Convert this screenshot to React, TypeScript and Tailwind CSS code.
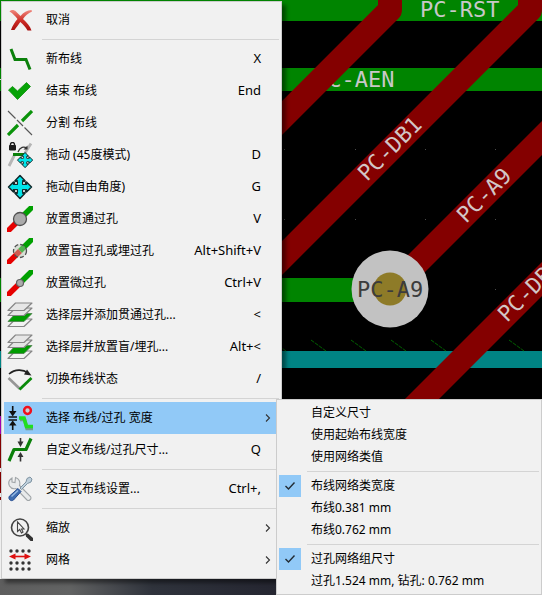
import React from "react";

type IconProps = { children: React.ReactNode };

const Icon = ({ children }: IconProps) => (
  <svg viewBox="0 0 26 26" className="h-[26px] w-[26px] shrink-0" aria-hidden="true">
    {children}
  </svg>
);

const MoveCross = () => (
  <g>
    <path
      d="M13 1.5 18 6.8h-2.2v3.4h3.7V8L24.500 13 19.500 18v-2.200h-3.700v3.400H18L13 24.500 8 19.200h2.200v-3.400H6.500V18L1.500 13 6.500 8v2.200h3.700V6.800H8z"
      fill="#00e5ea"
      stroke="#12292b"
      strokeWidth="1.500"
      strokeLinejoin="round"
    />
    <g fill="#f0f0f0" stroke="#12292b" strokeWidth="1.200">
      <rect x="7.500" y="7.500" width="3" height="3" rx="1" />
      <rect x="15.500" y="7.500" width="3" height="3" rx="1" />
      <rect x="7.500" y="15.500" width="3" height="3" rx="1" />
      <rect x="15.500" y="15.500" width="3" height="3" rx="1" />
    </g>
  </g>
);

const TwoToneTrack = () => (
  <g strokeWidth="5.500">
    <path d="M13 13 26 0" stroke="#00a000" />
    <path d="M0 26 13 13" stroke="#e60000" />
  </g>
);

const Layers = () => (
  <g stroke="#868686" strokeWidth="1.200" strokeLinejoin="round">
    <path d="M8.500 17H25L17 24.500H1z" fill="#f2f2f2" />
    <path d="M8.500 11.500H25L17 19.500H1z" fill="#009c00" stroke="#4a7d4a" strokeWidth="0.800" />
    <path d="M8.500 6H25L17 13.500H1z" fill="#e4e4e4" />
    <path d="M8.500 1H25L17 8.500H1z" fill="#e6e6e6" />
  </g>
);

const icons: Record<string, React.ReactNode> = {
  cancel: (
    <>
      <defs>
        <linearGradient id="cancelRed" x1="0" y1="0" x2="0" y2="1">
          <stop offset="0" stopColor="#f0897f" />
          <stop offset="0.500" stopColor="#cf2f28" />
          <stop offset="1" stopColor="#a80d0d" />
        </linearGradient>
      </defs>
      <path
        d="M2.500 4.500C4 2.500 7 2.500 9 4.500L13.500 9C16.500 5.500 20 3 24.500 3L25 4.500C21 6 18 9 16 12C20 16 23 19 24.500 23.500H20.500C18.500 20 16.500 17.500 13.300 15C11 18 9.500 20.500 7.500 23H4C5.500 18.500 8 15 10.500 12C8 9 6 6.500 2.500 4.500Z"
        fill="url(#cancelRed)"
      />
    </>
  ),
  track: <path d="M4 3 8 13.500H19L23 23.500" fill="none" stroke="#0b800b" strokeWidth="3" />,
  check: (
    <path d="M1.500 12 5.500 8.500 10.500 13 19.500 4.500 23.500 8.500 10.500 21.500z" fill="#07a307" stroke="#0c8f0c" strokeWidth="0.800" />
  ),
  split: (
    <>
      <path d="M1 1 25 25" stroke="#555" strokeWidth="1.100" />
      <path d="M1 25 11 15M15 11 25 1" stroke="#0a930a" strokeWidth="3.200" />
      <path d="M8.500 8.500 10 10M16 16 17.500 17.500" stroke="#f0f0f0" strokeWidth="2.500" />
    </>
  ),
  drag45: (
    <>
      <path d="M2 24 8 12M18 11 24 1.500" stroke="#b5b5b5" strokeWidth="2.800" />
      <path d="M6 12.500H17" stroke="#0b800b" strokeWidth="3" />
      <path d="M11 10C13 5 17 4 20 6.500" fill="none" stroke="#333" strokeWidth="1.300" />
      <path d="M20.500 3.500V7.500H16.500z" fill="#333" />
      <path d="M2.500 3.500h6v4.500h-6z" fill="#1c1c1c" stroke="#1c1c1c" />
      <path d="M3.500 3.500V2.500a2 2 0 0 1 4 0v1" fill="none" stroke="#1c1c1c" strokeWidth="1.400" />
      <g transform="translate(9.500 9.500) scale(.66)">
        <MoveCross />
      </g>
    </>
  ),
  drag: <MoveCross />,
  via: (
    <>
      <TwoToneTrack />
      <circle cx="13" cy="13" r="6.500" fill="#ababab" stroke="#505050" strokeWidth="1.300" />
    </>
  ),
  blindVia: (
    <>
      <TwoToneTrack />
      <circle cx="13" cy="13" r="6.500" fill="#b8c8b4" fillOpacity="0.450" stroke="#505050" strokeWidth="1.300" strokeDasharray="4 2" />
    </>
  ),
  microVia: (
    <>
      <TwoToneTrack />
      <circle cx="13" cy="13" r="3.500" fill="#ababab" stroke="#606060" strokeWidth="1.200" />
    </>
  ),
  layers: <Layers />,
  posture: (
    <>
      <path d="M1.500 12 13 23" stroke="#969696" strokeWidth="2.600" />
      <path d="M12.500 23.500 24.500 12" stroke="#0a8a0a" strokeWidth="2.800" />
      <path d="M2 8C8 3 16 3 21 7" fill="none" stroke="#222" strokeWidth="1.600" />
      <path d="M20 3.500 24.500 9.500 17 8.500z" fill="#222" />
    </>
  ),
  width: (
    <>
      <path d="M1.500 12H10M1.500 15H10" stroke="#111" strokeWidth="1.600" />
      <path d="M5.700 1V7M5.700 19V25" stroke="#111" strokeWidth="1.600" />
      <path d="M2 6H9.500L5.700 11.500zM2 20.500H9.500L5.700 15.500z" fill="#111" />
      <path d="M13 14.500H17.500L20 23.500H26" fill="none" stroke="#6f9d8d" strokeWidth="3.500" />
      <path d="M12 13H17L19.500 21.500H26" fill="none" stroke="#20df20" strokeWidth="3.600" />
      <circle cx="20.500" cy="5.500" r="3.400" fill="#c9cdd2" stroke="#f0101c" strokeWidth="2.500" />
    </>
  ),
  custom: (
    <>
      <path d="M2 24 7 12.500H19L24 1.500" fill="none" stroke="#0b800b" strokeWidth="3.200" strokeLinejoin="round" />
      <path d="M13.500 1V6M13.500 19V24.500" stroke="#333" strokeWidth="1.600" />
      <path d="M10.500 4.500H16.500L13.500 10zM10.500 20H16.500L13.500 15z" fill="#333" />
    </>
  ),
  tools: (
    <>
      <path
        d="M5 2C2 4 1 7 2.500 10C4 12.500 7 13 9 12.500L20 24C22 25.500 25 23 23.500 20.500L12.500 9.500C13.500 6 12 2.500 8.500 1.500L8 6.500 5 6z"
        fill="#e8eaeb"
        stroke="#a0a5a8"
        strokeWidth="1.100"
      />
      <path d="M13 12 19 6 20 2.500 23 1 25 3 24 6 20.500 7.500 14.500 13.500z" fill="#bfd0dc" stroke="#7e93a2" strokeWidth="1" />
      <path d="M2.500 20 11 12.500 14 15.500 6.500 24C4 26 0.500 23 2.500 20z" fill="#3f6db0" stroke="#274e91" strokeWidth="1" />
      <path d="M4.500 20.500 11 14.500" stroke="#96b9e3" strokeWidth="1.500" />
    </>
  ),
  zoom: (
    <>
      <circle cx="13" cy="12.500" r="8.500" fill="none" stroke="#444" strokeWidth="1.600" />
      <path d="M18.500 19 21 18.500 26 23V26H23.500L19 21.500z" fill="#333" />
      <path d="M10.500 7V16.500L12.700 14.500 14.500 18 16 17 14.500 14H17z" fill="#f4f4f4" stroke="#444" strokeWidth="1.100" />
    </>
  ),
  grid: (
    <>
      {[4, 10, 16, 22].map((x) =>
        [4, 16, 22].map((y) => <circle key={`${x}-${y}`} cx={x} cy={y} r="1.700" fill="#333" />),
      )}
      <path d="M6 9.500H20" stroke="#dd1010" strokeWidth="1.600" />
      <path d="M2 9.500 8.500 6.500V12.500zM24 9.500 17.500 6.500V12.500z" fill="#dd1010" />
    </>
  ),
};

type Entry = { label: string; icon: string; keys?: string; sub?: boolean; active?: boolean };

const groups: Entry[][] = [
  [{ label: "取消", icon: "cancel" }],
  [
    { label: "新布线", icon: "track", keys: "X" },
    { label: "结束 布线", icon: "check", keys: "End" },
    { label: "分割 布线", icon: "split" },
    { label: "拖动 (45度模式)", icon: "drag45", keys: "D" },
    { label: "拖动(自由角度)", icon: "drag", keys: "G" },
    { label: "放置贯通过孔", icon: "via", keys: "V" },
    { label: "放置盲过孔或埋过孔", icon: "blindVia", keys: "Alt+Shift+V" },
    { label: "放置微过孔", icon: "microVia", keys: "Ctrl+V" },
    { label: "选择层并添加贯通过孔...", icon: "layers", keys: "<" },
    { label: "选择层并放置盲/埋孔...", icon: "layers", keys: "Alt+<" },
    { label: "切换布线状态", icon: "posture", keys: "/" },
  ],
  [
    { label: "选择 布线/过孔 宽度", icon: "width", sub: true, active: true },
    { label: "自定义布线/过孔尺寸...", icon: "custom", keys: "Q" },
  ],
  [{ label: "交互式布线设置...", icon: "tools", keys: "Ctrl+," }],
  [
    { label: "缩放", icon: "zoom", sub: true },
    { label: "网格", icon: "grid", sub: true },
  ],
];

const sizeGroups: { label: string; checked?: boolean }[][] = [
  [{ label: "自定义尺寸" }, { label: "使用起始布线宽度" }, { label: "使用网络类值" }],
  [{ label: "布线网络类宽度", checked: true }, { label: "布线0.381 mm" }, { label: "布线0.762 mm" }],
  [{ label: "过孔网络组尺寸", checked: true }, { label: "过孔1.524 mm, 钻孔: 0.762 mm" }],
];

const Board = () => (
  <svg className="absolute inset-0 h-full w-full bg-black" aria-hidden="true">
    <defs>
      <linearGradient id="deskGlow" x1="0" y1="0" x2="1" y2="0">
        <stop offset="0" stopColor="#5e5e5e" />
        <stop offset="0.250" stopColor="#626363" />
        <stop offset="0.550" stopColor="#2f333c" />
        <stop offset="1" stopColor="#252631" />
      </linearGradient>
    </defs>
    <rect width="100%" height="21" fill="#008400" />
    <rect y="68" width="100%" height="23" fill="#008400" />
    <rect y="278" width="390" height="24" fill="#008400" />
    <rect y="351" width="100%" height="17" fill="#008484" />
    <rect y="79" width="1" height="1" fill="#e0e0e0" />
    <rect y="416" width="1" height="18" fill="#a000b4" />
    <rect y="434" width="1" height="66" fill="#840000" />
    <rect y="468" width="1" height="4" fill="#e8e8e8" />
    <rect y="493" width="1" height="4" fill="#e8e8e8" />
    <rect y="500" width="1" height="79" fill="#f0f0f0" />
    <g className="font-['DejaVu_Sans_Mono',monospace] text-[22px]" fill="#c8c8c8">
      <text x="420" y="17">PC-RST</text>
      <text x="315" y="87">PC-AEN</text>
    </g>
    <g fill="#4a4a4a">
      {[284, 355, 425, 495].map((x) => (
        <g key={x}>
          <rect x={x} y="149" width="1" height="1" />
          <rect x={x} y="219" width="1" height="1" />
        </g>
      ))}
      <rect x="495" y="289" width="1" height="1" />
    </g>
    <g stroke="#006000" strokeWidth="1" strokeDasharray="4 1">
      {[271, 311, 351, 391, 431, 509].map((x) => (
        <path key={x} d={`M${x} 340l15 11`} />
      ))}
    </g>
    <g fill="none" stroke="#840000" strokeWidth="24" strokeLinejoin="round">
      <path d="M390-20V10L270 130" />
      <path d="M530-20V10L270 270" />
      <path d="M390 290 580 100" />
      <path d="M380 441 580 241" />
    </g>
    <circle cx="390" cy="289" r="38.500" fill="#c2c2c2" />
    <circle cx="390" cy="289" r="16.500" fill="#8e7b28" />
    <g className="font-['DejaVu_Sans_Mono',monospace] text-[22px]" fill="#d2c6c6">
      <text transform="translate(367 182) rotate(-45)">PC-DB1</text>
      <text transform="translate(466 224) rotate(-45)">PC-A9</text>
      <text transform="translate(507 323) rotate(-45)">PC-DB</text>
      <text x="357" y="297" fill="#3c3c3c">PC-A9</text>
    </g>
    <rect y="579" width="277" height="100%" fill="url(#deskGlow)" />
  </svg>
);

const Separator = ({ inset }: { inset: string }) => (
  <div role="separator" className={`my-[3px] h-px bg-[#d4d4d4] ${inset}`} />
);

const Chevron = () => (
  <svg viewBox="0 0 6 8" className="h-2 w-1.5" aria-hidden="true">
    <path d="M1 .5 4.500 4 1 7.500" fill="none" stroke="#333" strokeWidth="1.100" />
  </svg>
);

const SizeMenu = () => (
  <div
    role="menu"
    className="absolute left-[272px] top-[-3px] z-10 w-[266px] border border-[#cccccc] bg-[#f1f1f1] p-0.5"
  >
    {sizeGroups.map((group, i) => (
      <React.Fragment key={i}>
        {i > 0 && <Separator inset="ml-7" />}
        {group.map(({ label, checked }) => (
          <button
            key={label}
            role="menuitemcheckbox"
            aria-checked={!!checked}
            className="flex h-[22px] w-full items-center gap-2.5 text-left whitespace-nowrap"
          >
            <span className={`flex h-[22px] w-[22px] items-center justify-center ${checked ? "bg-[#91c9f7]" : ""}`}>
              {checked && (
                <svg viewBox="0 0 12 10" className="h-2.5 w-3" aria-hidden="true">
                  <path d="M1.500 5 4.500 8 10.500 1.500" fill="none" stroke="#222b33" strokeWidth="1.400" />
                </svg>
              )}
            </span>
            {label}
          </button>
        ))}
      </React.Fragment>
    ))}
  </div>
);

const MainMenu = () => (
  <div
    role="menu"
    className="relative w-[281px] border border-[#cccccc] bg-[#f1f1f1] p-0.5 shadow-[4px_4px_4px_rgba(0,0,0,0.45)]"
  >
    {groups.map((group, i) => (
      <React.Fragment key={i}>
        {i > 0 && <Separator inset="ml-[38px]" />}
        {group.map(({ label, icon, keys, sub, active }) => (
          <div key={label} className="relative">
            <button
              role="menuitem"
              aria-haspopup={sub ? "menu" : undefined}
              className={`flex h-8 w-full items-center gap-[13px] pl-[3px] text-left whitespace-nowrap ${active ? "bg-[#91c9f7]" : ""}`}
            >
              <Icon>{icons[icon]}</Icon>
              <span className="flex-1">{label}</span>
              {keys && <span className="pr-[18px] text-[13px]">{keys}</span>}
              {sub && (
                <span className="pr-2">
                  <Chevron />
                </span>
              )}
            </button>
            {active && <SizeMenu />}
          </div>
        ))}
      </React.Fragment>
    ))}
  </div>
);

export default function App() {
  return (
    <main className="relative min-h-screen w-full overflow-hidden pl-px pt-px font-['Noto_Sans','Noto_Sans_CJK_SC',sans-serif] text-xs text-black">
      <Board />
      <MainMenu />
    </main>
  );
}
